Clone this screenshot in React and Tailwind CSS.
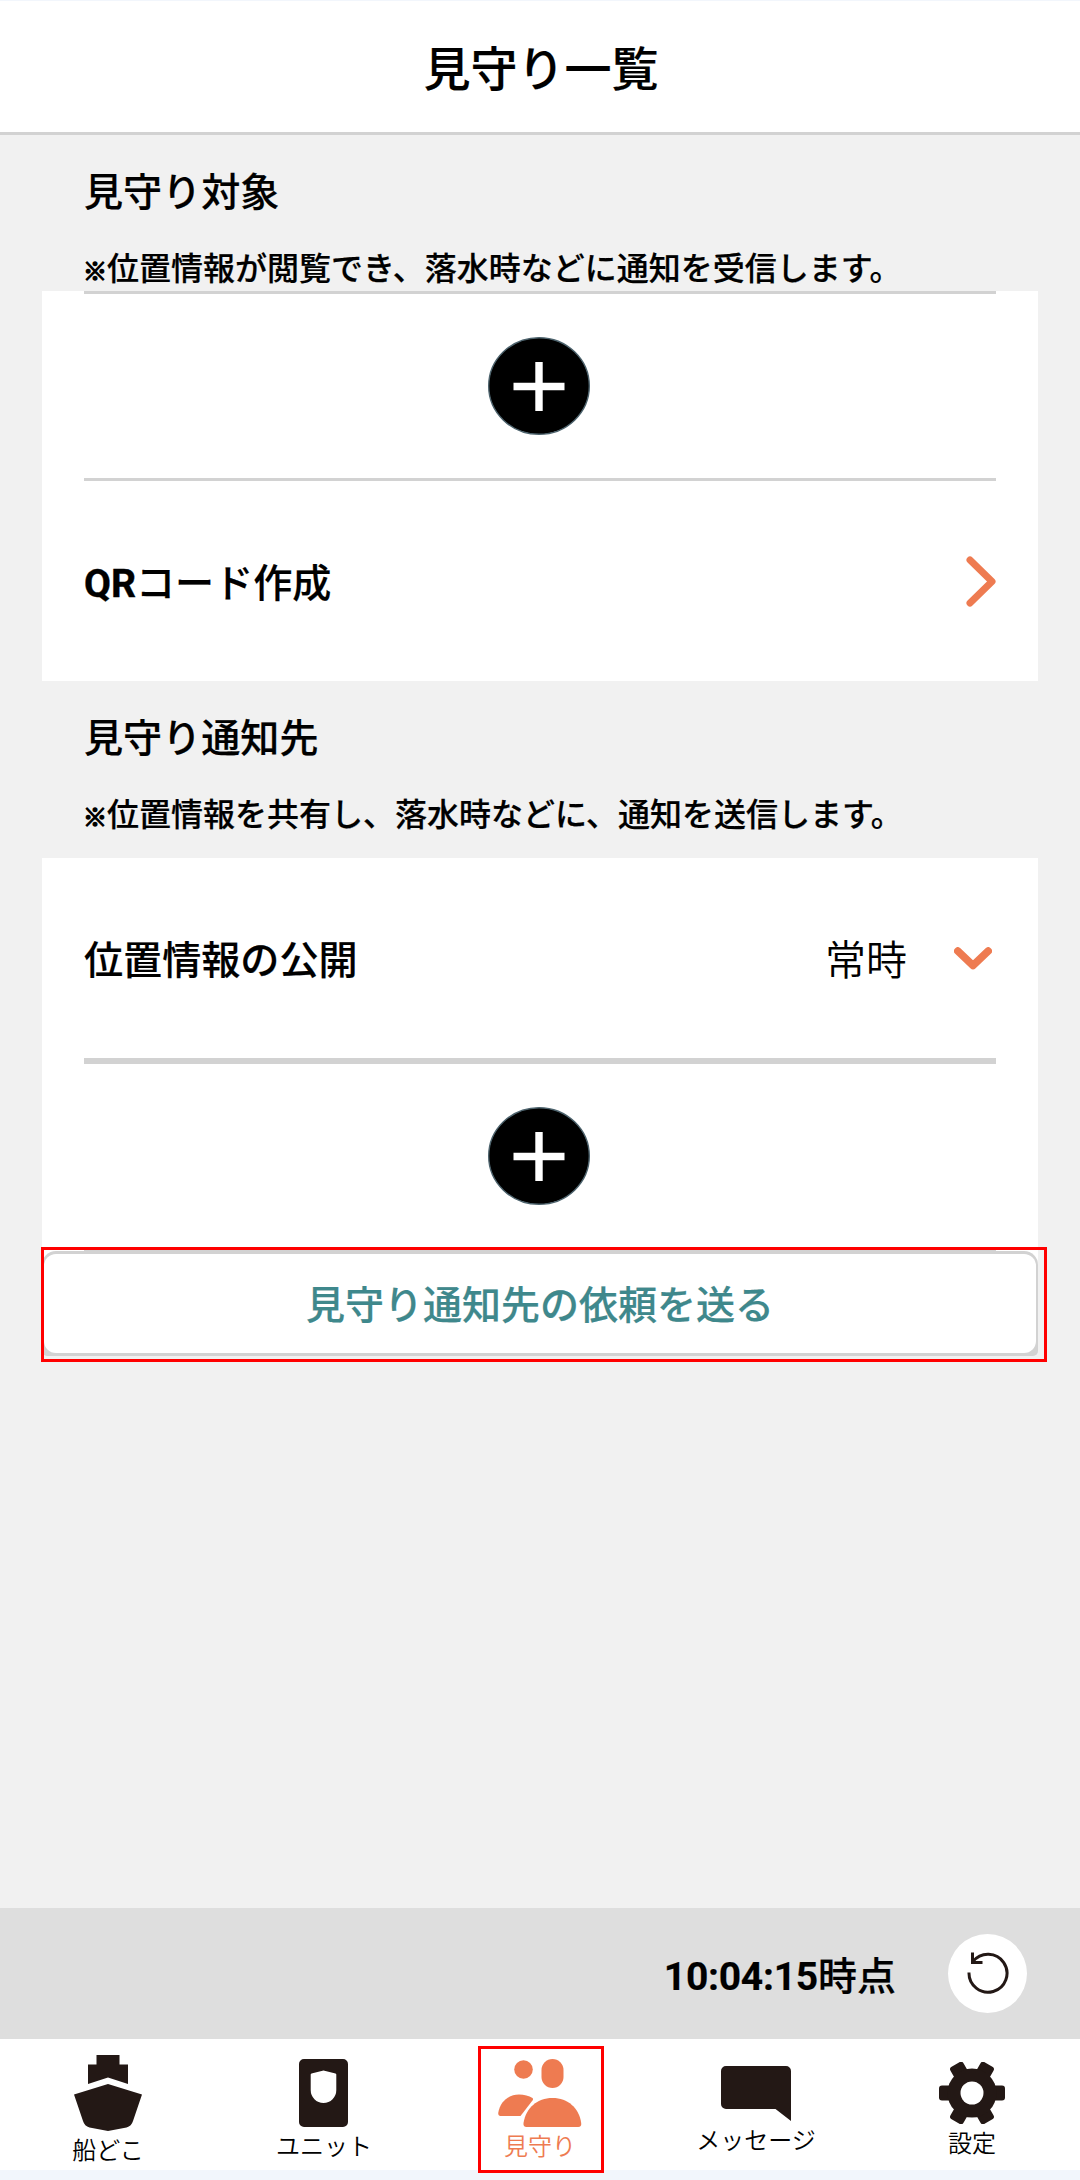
import React from "react";

const FONT =
  "font-[Roboto,'Noto_Sans_CJK_JP',sans-serif]";

const PlusIcon = () => (
  <svg width="102" height="98" viewBox="0 0 102 98" className="block">
    <ellipse cx="51" cy="49" rx="50.300" ry="48.300" fill="#000" stroke="#4c626c" strokeWidth="1.400" />
    <path d="M25.500 49.500h51M51 25v49" stroke="#fff" strokeWidth="7.400" />
  </svg>
);

const ShipIcon = () => (
  <svg width="68" height="76" viewBox="0 0 68 76" fill="#231815" className="block">
    <path d="M22.500 0h23v9.500H54V29L34 22.500 14 29V9.500h8.500z" />
    <path d="M34 29l34 10.500-9 26.500q-1.500 5-6.500 6.500L34 76l-18.500-3.500Q10.500 71 9 66L0 39.500z" />
  </svg>
);

const UnitIcon = () => (
  <svg width="49" height="68" viewBox="0 0 49 68" fill="#231815" className="mr-[2px] block">
    <path
      fillRule="evenodd"
      d="M5 0h39a5 5 0 0 1 5 5v58a5 5 0 0 1-5 5H5a5 5 0 0 1-5-5V5a5 5 0 0 1 5-5zM24.500 11.500l-12 3q-.8.3-.8 1V31a12.800 13 0 0 0 25.600 0V15.500q0-.7-.8-1z"
    />
  </svg>
);

const WatchIcon = () => (
  <svg width="84" height="68" viewBox="0 0 84 68" fill="#ee7b51" className="block">
    <circle cx="25.500" cy="10.500" r="9.300" />
    <rect x="43.500" y="0" width="22" height="29" rx="11" />
    <path d="M34.500 41.500L22.500 57H2.500Q0 57 .3 53.500C2 43 10 35.500 21 35.500q8 0 13.500 3.500 1 1.200 0 2.500z" />
    <path d="M28.500 68q-3.500 0-3-4C28 49 39 39 54.500 39S81 49 83.200 64q.5 4-3 4z" />
  </svg>
);

const MessageIcon = () => (
  <svg width="70" height="55" viewBox="0 0 70 55" fill="#231815" className="block">
    <path d="M5 0h60a5 5 0 0 1 5 5v50L54.500 43H5a5 5 0 0 1-5-5V5a5 5 0 0 1 5-5z" />
  </svg>
);

const GearIcon = () => (
  <svg width="66" height="62" viewBox="0 0 66 62" className="block">
    <g fill="#231815">
      <rect x="0" y="23.500" width="66" height="15" rx="3" />
      <rect x="0" y="23.500" width="66" height="15" rx="3" transform="rotate(60 33 31)" />
      <rect x="0" y="23.500" width="66" height="15" rx="3" transform="rotate(120 33 31)" />
      <circle cx="33" cy="31" r="24.500" />
    </g>
    <circle cx="33" cy="31" r="11.500" fill="#fff" />
  </svg>
);

const ReloadIcon = () => (
  <svg width="42" height="44" viewBox="0 0 42 44" fill="none" stroke="#231815" strokeWidth="3" className="block">
    <path d="M2 20.500A19 19 0 1 0 6 9.500" />
    <path d="M5.500 0.500v10h10" />
  </svg>
);

const SectionHeading = ({ title, note }) => (
  <div className="px-[84px]">
    <h2 className="h-[58px] text-[39.1px] leading-[61px] font-medium [-webkit-text-stroke:0.2px]">{title}</h2>
    <p className="mt-[24px] h-[46px] text-[32px] leading-[49px] font-medium whitespace-nowrap [-webkit-text-stroke:0.2px]">
      <span className="inline-block w-[23px] -translate-x-px text-[24px] font-bold [-webkit-text-stroke:1.4px]">※</span>
      {note}
    </p>
  </div>
);

const tabs = [
  { label: "船どこ", Icon: ShipIcon, pad: "pt-[16px]" },
  { label: "ユニット", Icon: UnitIcon, pad: "pt-[20px]" },
  { label: "見守り", Icon: WatchIcon, pad: "pt-[20px]", active: true },
  { label: "メッセージ", Icon: MessageIcon, pad: "pt-[27px]" },
  { label: "設定", Icon: GearIcon, pad: "pt-[23px]" },
];

const App = () => {
  return (
    <div className={`flex h-[2180px] w-[1080px] flex-col bg-[#f1f1f1] text-black ${FONT}`} lang="ja">
      {/* ===== Header ===== */}
      <header className="flex h-[135px] items-center justify-center border-t border-b-3 border-t-[#f2f6fc] border-b-[#d2d2d2] bg-white pt-[7px] pl-[2px]">
        <h1 className="text-[47px] leading-[60px] font-medium [-webkit-text-stroke:0.2px]">見守り一覧</h1>
      </header>

      <main className="flex-1">
        {/* ===== Watch targets ===== */}
        <section className="pt-[28px]">
          <SectionHeading title="見守り対象" note="位置情報が閲覧でき、落水時などに通知を受信します。" />
          <div className="mx-[42px] h-[390px] bg-white px-[42px]">
            <div className="flex h-[190px] justify-center border-y-3 border-[#d2d2d2] pt-[43px] pr-[2px]">
              <PlusIcon />
            </div>
            <div className="flex h-[200px] items-center justify-between">
              <span className="pt-[7px] text-[39.1px] font-medium [-webkit-text-stroke:0.2px]">
                <b className="font-bold [-webkit-text-stroke:0.4px]">QR</b>コード作成
              </span>
              <svg width="30" height="51" viewBox="0 0 30 51" fill="none" className="block">
                <path d="M4 4l22 21.500L4 47" stroke="#ee7b51" strokeWidth="7" strokeLinecap="round" strokeLinejoin="round" />
              </svg>
            </div>
          </div>
        </section>

        {/* ===== Notification contacts ===== */}
        <section className="pt-[28px]">
          <SectionHeading title="見守り通知先" note="位置情報を共有し、落水時などに、通知を送信します。" />
          <div className="mx-[42px] mt-[21px] bg-white px-[42px] pb-[14px]">
            <div className="flex h-[206px] items-center border-b-6 border-[#d2d2d2]">
              <span className="flex-1 pt-[7px] text-[39.1px] font-medium [-webkit-text-stroke:0.2px]">位置情報の公開</span>
              <span className="pt-[7px] text-[41px] font-[350]">常時</span>
              <svg width="38" height="23" viewBox="0 0 38 23" fill="none" className="mr-[4px] ml-[47px] block">
                <path d="M3.800 4L19 18.500 34.200 4" stroke="#ee7b51" strokeWidth="7.600" strokeLinecap="round" strokeLinejoin="round" />
              </svg>
            </div>
            <div className="flex h-[187px] justify-center border-b-3 border-[#d2d2d2] pt-[43px] pr-[2px]">
              <PlusIcon />
            </div>
          </div>
          <div className="relative mx-[42px] -mt-[14px] h-[105px]">
            <div className="h-[105px] rounded-t-[14px] rounded-b-[5px] bg-[#d2d2d2] px-[2px] py-[3px]">
              <button className="block h-[99px] w-full rounded-[12px] bg-white pt-[6px] text-[39px] font-medium text-[#3f888c] [-webkit-text-stroke:0.2px]">
                見守り通知先の依頼を送る
              </button>
            </div>
            <div className="absolute -top-[4px] -left-[1px] h-[115px] w-[1006px] border-3 border-[#ff0000]" />
          </div>
        </section>
      </main>

      {/* ===== Updated time ===== */}
      <div className="flex h-[131px] items-center justify-end bg-[#dedede] pr-[53px]">
        <span className="pt-[7px] text-[39px] font-medium [-webkit-text-stroke:0.2px]">
          <b className="font-bold tracking-[-0.25px]">10:04:15</b>時点
        </span>
        <button className="ml-[52px] flex size-[79px] items-center justify-center rounded-full bg-white">
          <ReloadIcon />
        </button>
      </div>

      {/* ===== Tab bar ===== */}
      <nav className="grid h-[141px] grid-cols-5 border-b-10 border-[#f2f6fc] bg-white">
        {tabs.map(({ label, Icon, pad, active }) => (
          <div key={label} className={`relative flex flex-col items-center ${pad} ${active ? "text-[#ee7b51]" : ""}`}>
            <Icon />
            <span className="mt-[2px] text-[24px] leading-[37px] font-[350]">{label}</span>
            {active && (
              <div className="absolute top-[7px] left-[46px] h-[127px] w-[126px] border-3 border-[#ff0000]" />
            )}
          </div>
        ))}
      </nav>
    </div>
  );
};

export default App;
